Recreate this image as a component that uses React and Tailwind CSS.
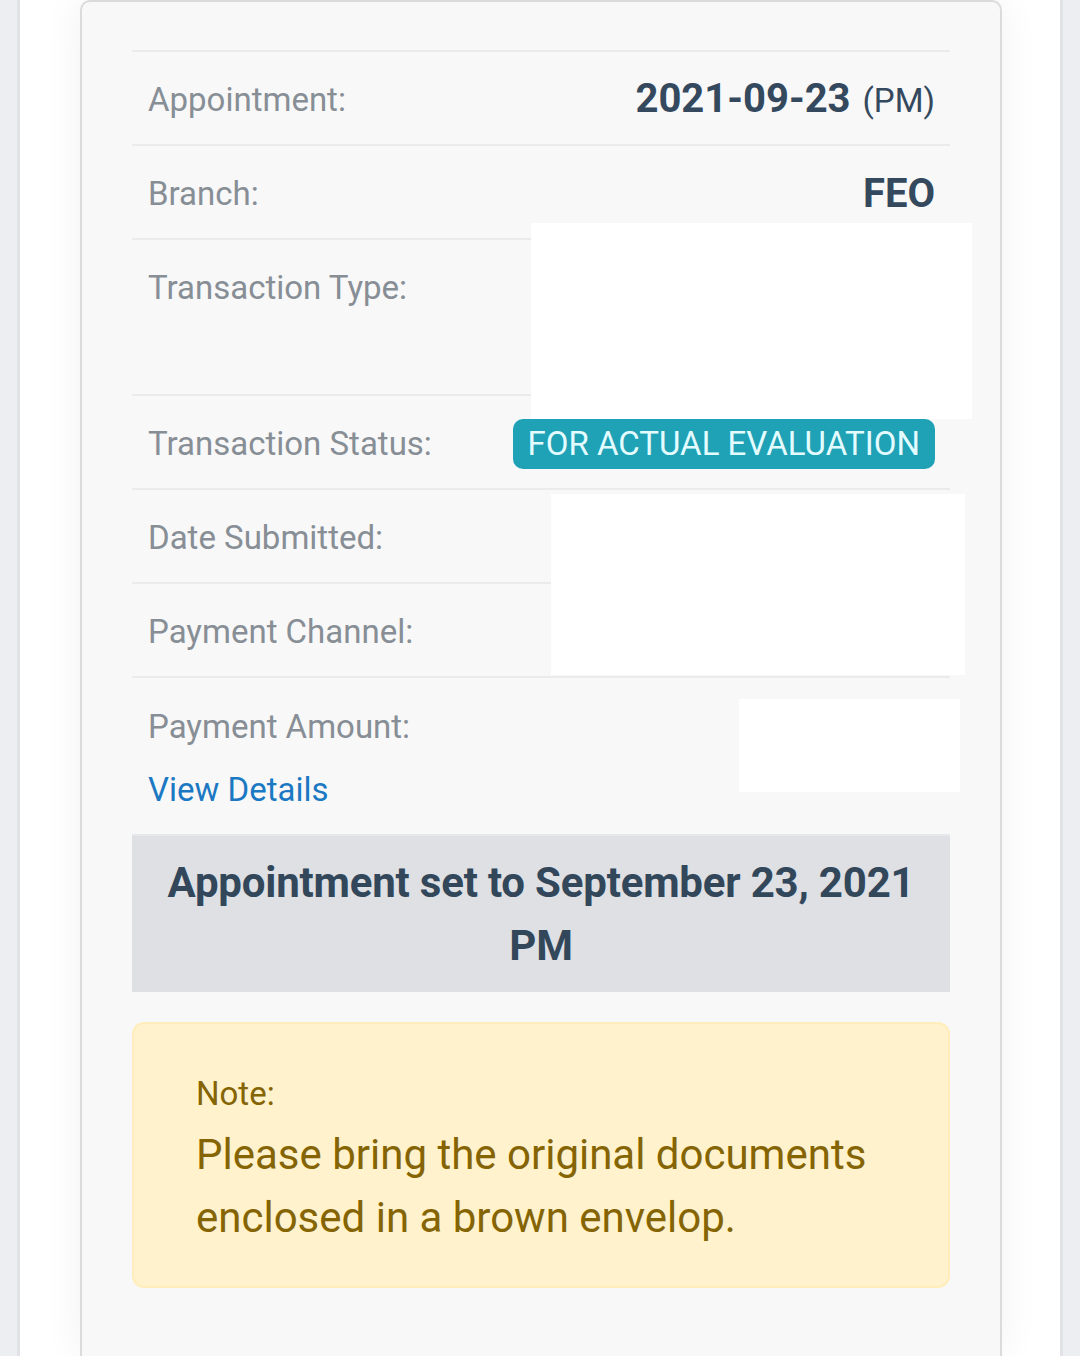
import React from 'react';

const rows = [
  { label: 'Appointment:', value: 'date' },
  { label: 'Branch:', value: 'FEO' },
  { label: 'Transaction Type:', tall: true },
  { label: 'Transaction Status:', value: 'status' },
  { label: 'Date Submitted:' },
  { label: 'Payment Channel:' },
];

function Value({ kind }) {
  if (kind === 'date') {
    return (
      <span className="flex items-baseline gap-[12px] text-[#34495e]">
        <span className="text-[40px] font-bold leading-[38px]">2021-09-23</span>
        <span className="text-[33px] leading-[38px]">(PM)</span>
      </span>
    );
  }
  if (kind === 'status') {
    return (
      <span className="rounded-[10px] bg-[#1fa1b6] px-[15px] py-[6px] text-[33px] leading-[38px] text-[#e3fcff]">
        FOR ACTUAL EVALUATION
      </span>
    );
  }
  if (kind) {
    return <span className="text-[40px] font-bold leading-[38px] text-[#34495e]">{kind}</span>;
  }
  return null;
}

export default function App() {
  return (
    <div className="h-[1356px] overflow-hidden bg-[#eceef2] px-[17px] font-['Roboto',sans-serif]">
      <div className="h-full border-x-[3px] border-[#e1e2e5] bg-white pl-[60px] pr-[58px]">
        <div className="relative h-full rounded-t-[10px] border-2 border-b-0 border-[#dadbdc] bg-[#f8f8f8] px-[50px] pt-[48px] shadow-[0_0_40px_rgba(0,0,0,0.06)]">
          {rows.map((r) => (
            <div
              key={r.label}
              className={`flex justify-between border-t-2 border-[#e9ebed] pl-4 pr-[15px] pt-[29px] ${r.tall ? 'h-[156px] items-start' : 'h-[94px] items-center pb-[25px]'}`}
            >
              <span className="text-[33px] leading-[38px] text-[#878e95]">{r.label}</span>
              <Value kind={r.value} />
            </div>
          ))}

          <div className="border-t-2 border-[#e9ebed] px-4 pb-[25px] pt-[30px]">
            <div className="text-[33px] leading-[38px] text-[#878e95]">Payment Amount:</div>
            <div className="mt-[25px] text-[33px] leading-[38px] text-[#1b78c2]">View Details</div>
          </div>

          <div className="border-t-2 border-[#e6e8eb] bg-[#dee0e4] px-6 py-[15px] text-center text-[42px] font-bold leading-[63px] tracking-[-0.2px] text-[#33475b]">
            Appointment set to September 23, 2021 PM
          </div>

          <div className="mt-[30px] h-[266px] rounded-[12px] border-2 border-[#ffeebb] bg-[#fff2cc] pl-[62px] pr-6 pt-[51px] text-[#856404]">
            <div className="text-[33px] leading-[38px]">Note:</div>
            <div className="mt-[10px] text-[42px] leading-[63px]">
              Please bring the original documents enclosed in a brown envelop.
            </div>
          </div>

          {/* redacted values */}
          <div className="absolute left-[449px] top-[221px] h-[196px] w-[441px] bg-white" />
          <div className="absolute left-[469px] top-[492px] h-[181px] w-[414px] bg-white" />
          <div className="absolute left-[657px] top-[697px] h-[93px] w-[221px] bg-white" />
        </div>
      </div>
    </div>
  );
}
